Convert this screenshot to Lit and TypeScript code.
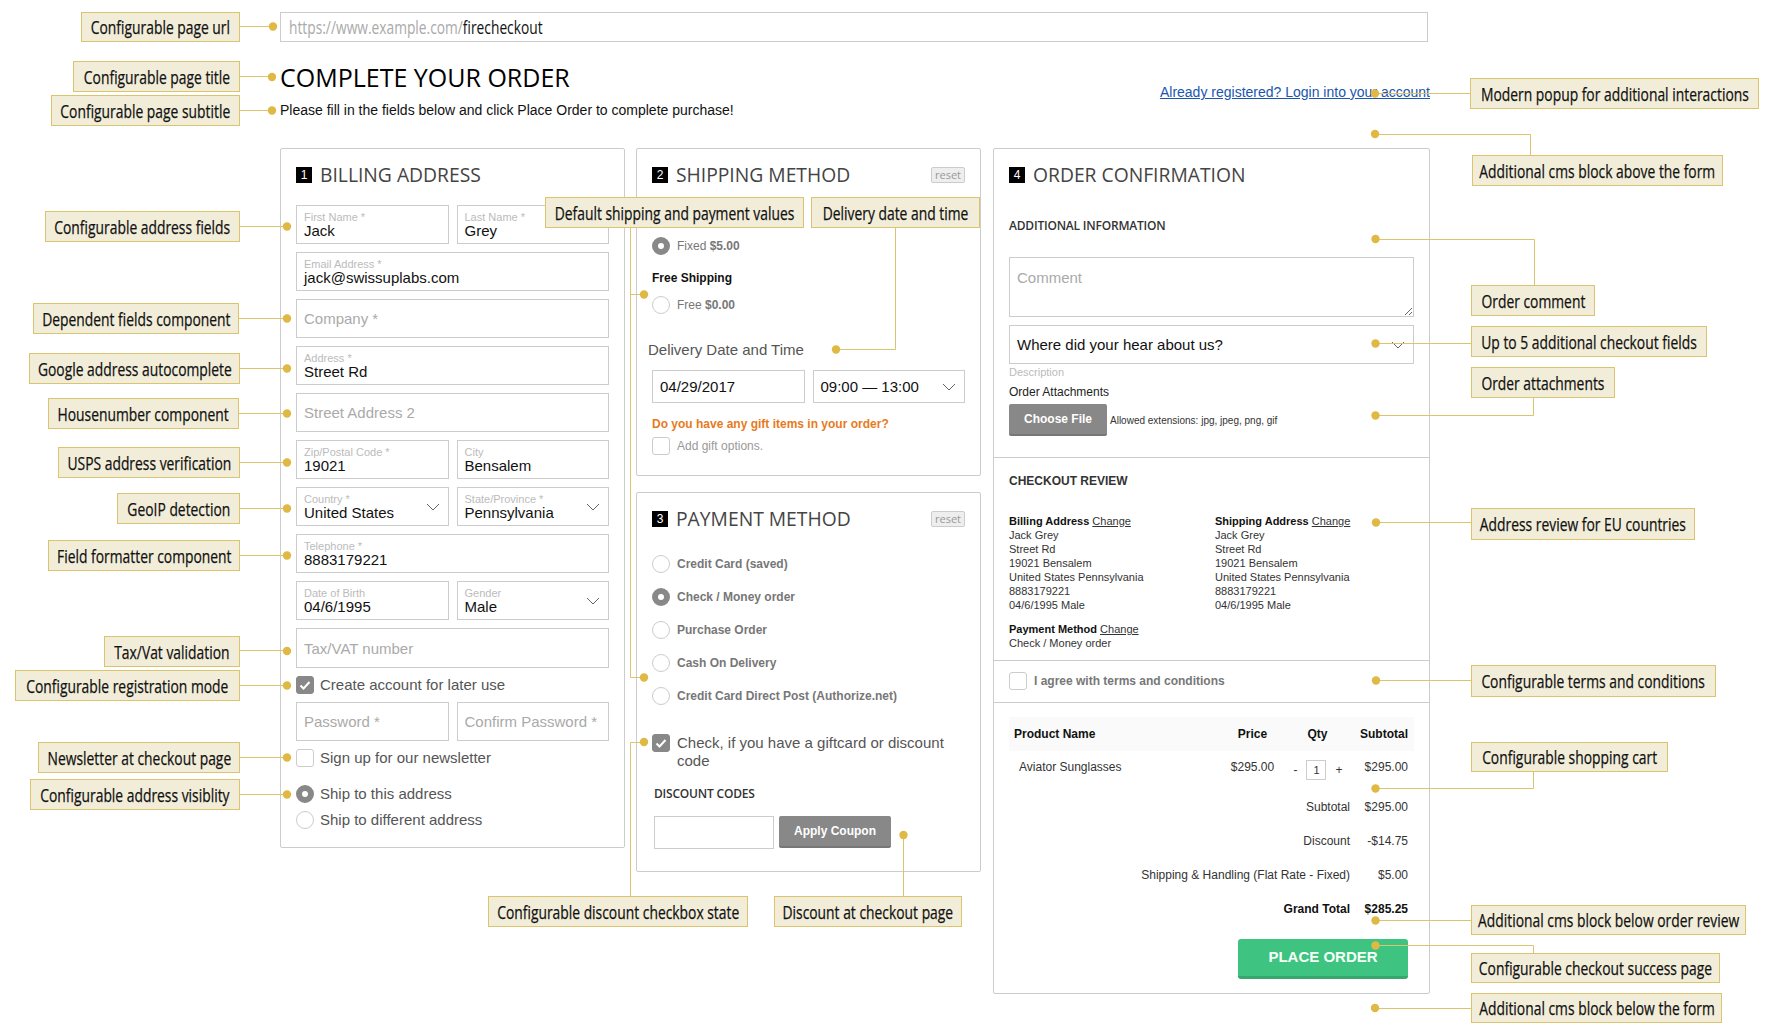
import { LitElement, css, html, nothing, svg } from "lit";
import { customElement } from "lit/decorators.js";

type Note = {
  text: string;
  x: number;
  y: number;
  w: number;
  h?: number;
  lines: string[];
  dots: number[][];
};

// annotation boxes sit on top of the form, their place on the canvas is the content
const NOTES: Note[] = [
  { text: "Configurable page url", x: 81, y: 12, w: 159, lines: ["240,26.5 273,26.5"], dots: [[273, 26.5]] },
  { text: "Configurable page title", x: 73, y: 61, w: 167, h: 31, lines: ["240,76.5 272,76.5"], dots: [[272, 77]] },
  { text: "Configurable page subtitle", x: 51, y: 95, w: 189, h: 31, lines: ["240,110.5 272,110.5"], dots: [[272, 110.5]] },
  { text: "Configurable address fields", x: 45, y: 211, w: 195, h: 31, lines: ["240,226.5 287,226.5"], dots: [[287, 226.5]] },
  { text: "Dependent fields component", x: 33, y: 303, w: 206, h: 31, lines: ["239,318.5 287,318.5"], dots: [[287, 318.5]] },
  { text: "Google address autocomplete", x: 29, y: 353, w: 211, h: 31, lines: ["240,368.5 287,368.5"], dots: [[287, 368.5]] },
  { text: "Housenumber component", x: 48, y: 398, w: 191, h: 31, lines: ["239,413.5 287,413.5"], dots: [[287, 413.5]] },
  { text: "USPS address verification", x: 58, y: 447, w: 182, h: 31, lines: ["240,462.5 287,462.5"], dots: [[287, 462.5]] },
  { text: "GeoIP detection", x: 117, y: 493, w: 123, h: 31, lines: ["240,508.5 287,508.5"], dots: [[287, 508.5]] },
  { text: "Field formatter component", x: 48, y: 540, w: 192, h: 31, lines: ["240,555.5 287,555.5"], dots: [[287, 555.5]] },
  { text: "Tax/Vat validation", x: 104, y: 636, w: 136, h: 31, lines: ["240,650.5 287,650.5"], dots: [[287, 651]] },
  { text: "Configurable registration mode", x: 15, y: 670, w: 225, h: 31, lines: ["240,685.5 287,685.5"], dots: [[287, 685.5]] },
  { text: "Newsletter at checkout page", x: 38, y: 742, w: 202, h: 31, lines: ["240,757.5 287,757.5"], dots: [[287, 757.5]] },
  { text: "Configurable address visiblity", x: 30, y: 779, w: 210, h: 31, lines: ["240,794.5 287,794.5"], dots: [[287, 794.5]] },
  {
    text: "Default shipping and payment values", x: 545, y: 197, w: 259, h: 31,
    lines: ["630.5,228 630.5,677.5 644,677.5", "630.5,294.5 644,294.5"],
    dots: [[644, 294.5], [644, 677.5]],
  },
  { text: "Delivery date and time", x: 811, y: 197, w: 169, h: 31, lines: ["895.5,228 895.5,349.5 836,349.5"], dots: [[836, 349.5]] },
  { text: "Configurable discount checkbox state", x: 488, y: 896, w: 260, h: 31, lines: ["630.5,896 630.5,742.5 644,742.5"], dots: [[644, 742]] },
  { text: "Discount at checkout page", x: 774, y: 896, w: 188, h: 31, lines: ["903.5,896 903.5,835"], dots: [[903.5, 835]] },
  { text: "Modern popup for additional interactions", x: 1470, y: 78, w: 289, h: 31, lines: ["1375,93.5 1470,93.5"], dots: [[1375, 93.5]] },
  { text: "Additional cms block above the form", x: 1472, y: 155, w: 251, h: 31, lines: ["1375,134.5 1530.5,134.5 1530.5,155"], dots: [[1375, 134]] },
  { text: "Order comment", x: 1471, y: 285, w: 124, h: 31, lines: ["1375,239.5 1534.5,239.5 1534.5,285"], dots: [[1375.5, 239]] },
  { text: "Up to 5 additional checkout fields", x: 1471, y: 326, w: 236, h: 31, lines: ["1375,343.5 1471,343.5"], dots: [[1375.5, 343.5]] },
  { text: "Order attachments", x: 1471, y: 367, w: 144, h: 31, lines: ["1375,415.5 1533.5,415.5 1533.5,398"], dots: [[1375.5, 415.5]] },
  { text: "Address review for EU countries", x: 1471, y: 508, w: 224, h: 32, lines: ["1376,522.5 1471,522.5"], dots: [[1376, 522.5]] },
  { text: "Configurable terms and conditions", x: 1471, y: 665, w: 245, h: 32, lines: ["1376,680.5 1471,680.5"], dots: [[1376, 680.5]] },
  { text: "Configurable shopping cart", x: 1471, y: 742, w: 197, lines: ["1375,788.5 1533.5,788.5 1533.5,772"], dots: [[1375.5, 788.5]] },
  { text: "Additional cms block below order review", x: 1471, y: 905, w: 275, lines: ["1375,920.5 1471,920.5"], dots: [[1375.5, 920.5]] },
  { text: "Configurable checkout success page", x: 1471, y: 953, w: 249, lines: ["1375,945.5 1533.5,945.5 1533.5,953"], dots: [[1375.5, 945.5]] },
  { text: "Additional cms block below the form", x: 1471, y: 993, w: 251, h: 30, lines: ["1375,1008.5 1471,1008.5"], dots: [[1375, 1008]] },
];

const chevron = html`<svg class="chev" width="14" height="8" viewBox="0 0 14 8"><path d="M1 1l6 6 6-6" fill="none" stroke="#666" stroke-width="1"/></svg>`;

@customElement("app-root")
export class AppRoot extends LitElement {
  static styles = css`
    :host {
      display: block;
      position: relative;
      width: 1774px;
      height: 1027px;
      overflow: hidden;
      background: #fff;
      color: #111;
      font-family: "Liberation Sans", Arial, sans-serif;
    }
    * { box-sizing: border-box; }
    .page { padding: 12px 344px 0 280px; }

    .url {
      height: 30px;
      width: 1148px;
      border: 1px solid #ccc;
      padding-left: 8px;
      display: flex;
      align-items: center;
      font: 18px/1 "Open Sans", sans-serif;
      color: #111;
    }
    .url span { display: inline-block; transform: scaleX(0.765); transform-origin: left center; white-space: nowrap; }
    .url i { font-style: normal; color: #aaa; }

    .head { display: flex; justify-content: space-between; align-items: flex-start; margin-top: 17px; }
    h1 { margin: 0; padding-top: 1px; font: 400 25px/35px "Open Sans", sans-serif; color: #000; }
    .sub { margin-top: 5px; font-size: 14px; line-height: 20px; color: #111; }
    .login { margin-top: 23px; font-size: 14px; line-height: 20px; color: #1a56ae; text-decoration: underline; }

    .cols {
      display: grid;
      grid-template-columns: 345px 345px 438px;
      column-gap: 11px;
      align-items: start;
      margin-top: 28px;
    }
    .cols > :last-child { margin-left: 1px; }
    .stack { display: flex; flex-direction: column; gap: 16px; }
    .panel { border: 1px solid #ccc; border-radius: 2px; }
    .pad { padding: 14px 15px 18px; }
    .ptitle { display: flex; align-items: center; gap: 8px; height: 42px; padding-bottom: 18px; }
    .num {
      width: 16px;
      height: 16px;
      background: #000;
      color: #fff;
      font-size: 12px;
      line-height: 16px;
      text-align: center;
    }
    h2 { flex: 1; margin: 0; font: 400 19.3px/24px "Open Sans", sans-serif; color: #444; }
    .reset {
      width: 34px;
      height: 16px;
      border: 1px solid #ccc;
      border-radius: 2px;
      background: #eee;
      color: #999;
      font: 11px/14px "Open Sans", sans-serif;
      text-align: center;
    }

    .rows { display: flex; flex-direction: column; gap: 8px; }
    .two { display: grid; grid-template-columns: 1fr 1fr; gap: 8px; }
    .field {
      height: 39px;
      border: 1px solid #ccc;
      padding: 5px 7px 0;
      min-width: 0;
    }
    .field small { display: block; font-size: 11px; line-height: 12px; color: #bbb; }
    .field div { font-size: 15px; line-height: 16px; color: #111; }
    .select { display: flex; align-items: center; justify-content: space-between; padding: 0 8px 0 7px; }
    .select > div { padding-top: 1px; }
    input, textarea {
      display: block;
      width: 100%;
      height: 39px;
      border: 1px solid #ccc;
      border-radius: 0;
      padding: 0 7px;
      margin: 0;
      outline: none;
      background: #fff;
      font: 15px "Liberation Sans", Arial, sans-serif;
      color: #111;
    }
    input::placeholder, textarea::placeholder { color: #aaa; opacity: 1; }
    input.tall { height: 40px; }

    .check { display: flex; align-items: center; gap: 6px; font-size: 15px; line-height: 18px; color: #555; }
    .box {
      flex: none;
      display: block;
      width: 18px;
      height: 18px;
      border: 1px solid #ccc;
      border-radius: 3px;
      background: #fff;
    }
    .box.on { border-color: #888; background: #888; }
    .box svg { display: block; margin: -1px; }
    .box.round { border-radius: 50%; }
    .box.round.on { background: #fff; border: 6px solid #888; }
    .ship { margin-top: 10px; display: flex; flex-direction: column; gap: 8px; }

    .pad.sm { padding-bottom: 20px; }
    .method { font-size: 12px; line-height: 14px; font-weight: 700; color: #111; }
    .hidden-title { height: 14px; margin-top: 7px; }
    .method.next { margin-top: 16px; }
    .opt { margin-top: 11px; gap: 7px; font-size: 12px; color: #777; }
    .opt b { font-weight: 700; }
    .dt { margin: 27px 0 11px -4px; font-size: 15px; line-height: 18px; color: #555; }
    .short { height: 33px; }
    .short input { height: 33px; }
    .short div { padding-top: 0; }
    .gift { margin-top: 14px; font-size: 12px; line-height: 14px; font-weight: 700; color: #e87a1d; }
    .gift-opt { margin-top: 6px; gap: 7px; font-size: 12px; color: #999; }

    .pays { display: flex; flex-direction: column; gap: 15px; margin-top: 6px; }
    .pays .check { gap: 7px; font-size: 12px; font-weight: 700; color: #777; }
    .giftcard { margin-top: 29px; gap: 7px; align-items: flex-start; }
    .sub-h { font: 600 12px/16px "Open Sans", sans-serif; color: #333; letter-spacing: -0.2px; }
    .codes { margin: 16px 0 0 2px; }
    .coupon { display: flex; gap: 5px; margin: 14px 0 0 2px; padding-bottom: 4px; }
    .coupon input { width: 120px; height: 33px; }
    .btn {
      height: 32px;
      padding: 0;
      border: 0;
      border-bottom: 2px solid #777;
      border-radius: 2px;
      background: #888;
      color: #fff;
      font: 700 12px "Liberation Sans", Arial, sans-serif;
    }
    .coupon .btn { width: 112px; }

    .sec { padding: 0 15px; border-top: 1px solid #ccc; }
    .sec.top { padding: 14px 15px 21px; border-top: 0; }
    .add { margin-top: 13px; }
    .top textarea { height: 60px; margin-top: 23px; padding: 11px 7px 0; resize: both; font-size: 15px; }
    .top .field { margin-top: 8px; }
    .top .where { font-size: 15px; color: #111; }
    .desc { margin-top: 2px; font-size: 11px; line-height: 12px; color: #bbb; }
    .att { margin-top: 7px; font-size: 12px; line-height: 14px; color: #222; }
    .file { display: flex; align-items: center; gap: 3px; margin-top: 5px; font-size: 10px; color: #333; }
    .file .btn { width: 98px; }

    .review { padding-top: 16px; padding-bottom: 10px; font-size: 11px; line-height: 14px; color: #333; }
    .review h3 { margin: 0 0 26px; font-size: 12px; line-height: 14px; font-weight: 700; color: #333; }
    .review b { color: #111; }
    .review u { color: #333; }
    .addr { display: grid; grid-template-columns: 206px 1fr; margin-bottom: 10px; }
    .terms { padding-top: 11px; padding-bottom: 12px; }
    .terms .check { gap: 7px; font-size: 12px; font-weight: 700; color: #777; }

    .cart { padding-top: 14px; padding-bottom: 14px; font-size: 12px; line-height: 14px; color: #333; }
    .grid { display: grid; grid-template-columns: 206px 75px 55px 69px; }
    .thead { height: 34px; align-items: center; background: #f9faf9; font-weight: 700; color: #111; }
    .thead > :first-child { padding-left: 5px; }
    .mid { text-align: center; }
    .end { text-align: right; padding-right: 6px; }
    .item { padding-top: 9px; }
    .item > :first-child { padding-left: 10px; }
    .qty { display: flex; justify-content: center; align-items: center; gap: 9px; padding-left: 1px; }
    .qty span { width: 20px; height: 20px; border: 1px solid #ccc; text-align: center; line-height: 19px; font-size: 11px; }
    .totals {
      display: grid;
      grid-template-columns: auto 58px;
      justify-content: end;
      row-gap: 20px;
      margin-top: 20px;
      padding-right: 6px;
      text-align: right;
    }
    .totals .grand { font-weight: 700; color: #111; }
    .place-row { display: flex; justify-content: flex-end; margin-top: 23px; padding-right: 6px; }
    .place {
      width: 170px;
      height: 40px;
      padding: 0 0 3px;
      border: 0;
      border-bottom: 3px solid #35a86e;
      border-radius: 3px;
      background: #3fc380;
      color: #f4fff8;
      font: 700 15px "Liberation Sans", Arial, sans-serif;
    }

    .wires { position: absolute; left: 0; top: 0; pointer-events: none; }
    .note {
      position: absolute;
      display: flex;
      align-items: center;
      justify-content: center;
      overflow: hidden;
      border: 1px solid #dcc36e;
      background: #f2edd9;
      color: #111;
      font: 18px/1 "Open Sans", sans-serif;
      white-space: nowrap;
    }
    .note span { display: inline-block; transform: scaleX(0.77); -webkit-text-stroke: 0.25px #111; }
  `;

  private renderField(label: string, value: string, select = false) {
    return html`<div class="field ${select ? "select" : ""}">
      ${select
        ? html`<div><small>${label}</small><div>${value}</div></div>${chevron}`
        : html`<small>${label}</small><div>${value}</div>`}
    </div>`;
  }

  private renderBox(on = false, round = false) {
    return html`<span class="box ${on ? "on" : ""} ${round ? "round" : ""}">
      ${on && !round
        ? html`<svg width="18" height="18" viewBox="0 0 18 18"><path d="M4.5 9.5l3 3 6-6.5" fill="none" stroke="#fff" stroke-width="2"/></svg>`
        : nothing}
    </span>`;
  }

  private renderAddress(title: string) {
    return html`<div>
      <b>${title}</b> <u>Change</u><br />
      Jack Grey<br />
      Street Rd<br />
      19021 Bensalem<br />
      United States Pennsylvania<br />
      8883179221<br />
      04/6/1995 Male
    </div>`;
  }

  private renderBilling() {
    return html`<section class="panel pad">
      <div class="ptitle"><span class="num">1</span><h2>BILLING ADDRESS</h2></div>
      <div class="rows">
        <div class="two">${this.renderField("First Name *", "Jack")}${this.renderField("Last Name *", "Grey")}</div>
        ${this.renderField("Email Address *", "jack@swissuplabs.com")}
        <input placeholder="Company *" />
        ${this.renderField("Address *", "Street Rd")}
        <input placeholder="Street Address 2" />
        <div class="two">${this.renderField("Zip/Postal Code *", "19021")}${this.renderField("City", "Bensalem")}</div>
        <div class="two">
          ${this.renderField("Country *", "United States", true)}${this.renderField("State/Province *", "Pennsylvania", true)}
        </div>
        ${this.renderField("Telephone *", "8883179221")}
        <div class="two">${this.renderField("Date of Birth", "04/6/1995")}${this.renderField("Gender", "Male", true)}</div>
        <input class="tall" placeholder="Tax/VAT number" />
        <div class="check">${this.renderBox(true)}Create account for later use</div>
        <div class="two"><input placeholder="Password *" /><input placeholder="Confirm Password *" /></div>
        <div class="check">${this.renderBox()}Sign up for our newsletter</div>
        <div class="ship">
          <div class="check">${this.renderBox(true, true)}Ship to this address</div>
          <div class="check">${this.renderBox(false, true)}Ship to different address</div>
        </div>
      </div>
    </section>`;
  }

  private renderShipping() {
    return html`<section class="panel pad sm">
      <div class="ptitle"><span class="num">2</span><h2>SHIPPING METHOD</h2><span class="reset">reset</span></div>
      <div class="hidden-title"></div>
      <div class="check opt">${this.renderBox(true, true)}<span>Fixed <b>$5.00</b></span></div>
      <div class="method next">Free Shipping</div>
      <div class="check opt">${this.renderBox(false, true)}<span>Free <b>$0.00</b></span></div>
      <div class="dt">Delivery Date and Time</div>
      <div class="two short">
        <input value="04/29/2017" />
        <div class="field select short"><div>09:00 — 13:00</div>${chevron}</div>
      </div>
      <div class="gift">Do you have any gift items in your order?</div>
      <div class="check gift-opt">${this.renderBox()}Add gift options.</div>
    </section>`;
  }

  private renderPayment() {
    const methods = ["Credit Card (saved)", "Check / Money order", "Purchase Order", "Cash On Delivery", "Credit Card Direct Post (Authorize.net)"];
    return html`<section class="panel pad">
      <div class="ptitle"><span class="num">3</span><h2>PAYMENT METHOD</h2><span class="reset">reset</span></div>
      <div class="pays">
        ${methods.map((m, i) => html`<div class="check">${this.renderBox(i === 1, true)}${m}</div>`)}
      </div>
      <div class="check giftcard">${this.renderBox(true)}<span>Check, if you have a giftcard or discount code</span></div>
      <div class="sub-h codes">DISCOUNT CODES</div>
      <div class="coupon"><input /><button class="btn">Apply Coupon</button></div>
    </section>`;
  }

  private renderConfirmation() {
    return html`<section class="panel">
      <div class="sec top">
        <div class="ptitle"><span class="num">4</span><h2>ORDER CONFIRMATION</h2></div>
        <div class="sub-h add">ADDITIONAL INFORMATION</div>
        <textarea placeholder="Comment"></textarea>
        <div class="field select where"><div>Where did your hear about us?</div>${chevron}</div>
        <div class="desc">Description</div>
        <div class="att">Order Attachments</div>
        <div class="file"><button class="btn">Choose File</button>Allowed extensions: jpg, jpeg, png, gif</div>
      </div>
      <div class="sec review">
        <h3>CHECKOUT REVIEW</h3>
        <div class="addr">${this.renderAddress("Billing Address")}${this.renderAddress("Shipping Address")}</div>
        <div><b>Payment Method</b> <u>Change</u><br />Check / Money order</div>
      </div>
      <div class="sec terms"><div class="check">${this.renderBox()}I agree with terms and conditions</div></div>
      <div class="sec cart">
        <div class="grid thead">
          <div>Product Name</div><div class="mid">Price</div><div class="mid">Qty</div><div class="end">Subtotal</div>
        </div>
        <div class="grid item">
          <div>Aviator Sunglasses</div>
          <div class="mid">$295.00</div>
          <div class="qty">-<span>1</span>+</div>
          <div class="end">$295.00</div>
        </div>
        <div class="totals">
          <div>Subtotal</div><div>$295.00</div>
          <div>Discount</div><div>-$14.75</div>
          <div>Shipping &amp; Handling (Flat Rate - Fixed)</div><div>$5.00</div>
          <div class="grand">Grand Total</div><div class="grand">$285.25</div>
        </div>
        <div class="place-row"><button class="place">PLACE ORDER</button></div>
      </div>
    </section>`;
  }

  render() {
    return html`
      <div class="page">
        <div class="url"><span><i>https://www.example.com/</i>firecheckout</span></div>
        <div class="head">
          <div>
            <h1>COMPLETE YOUR ORDER</h1>
            <div class="sub">Please fill in the fields below and click Place Order to complete purchase!</div>
          </div>
          <a class="login">Already registered? Login into your account</a>
        </div>
        <div class="cols">
          ${this.renderBilling()}
          <div class="stack">${this.renderShipping()}${this.renderPayment()}</div>
          ${this.renderConfirmation()}
        </div>
      </div>
      <svg class="wires" width="1774" height="1027">
        ${NOTES.map(
          (n) => svg`
            ${n.lines.map((p) => svg`<polyline points=${p} fill="none" stroke="#dcc36e" stroke-width="1"/>`)}
            ${n.dots.map((d) => svg`<circle cx=${d[0]} cy=${d[1]} r="4.2" fill="#e0b945"/>`)}
          `,
        )}
      </svg>
      ${NOTES.map(
        (n) => html`<div class="note" style="left:${n.x}px;top:${n.y}px;width:${n.w}px;height:${n.h ?? 30}px"><span>${n.text}</span></div>`,
      )}
    `;
  }
}

declare global {
  interface HTMLElementTagNameMap {
    "app-root": AppRoot;
  }
}
